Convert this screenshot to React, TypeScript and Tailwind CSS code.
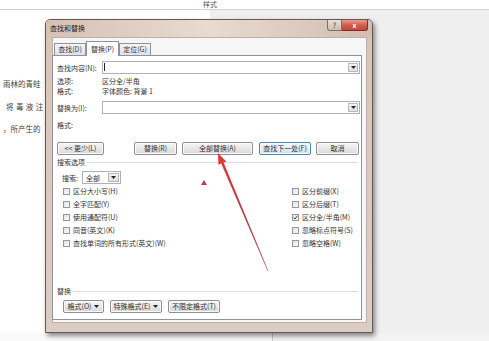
import clsx from "clsx";

const Caret = () => (
  <svg width="5" height="3" viewBox="0 0 5 3">
    <polygon points="0,0 5,0 2.5,3" fill="#222" />
  </svg>
);

const Btn = ({
  label,
  className,
  primary,
  caret,
}: {
  label: string;
  className: string;
  primary?: boolean;
  caret?: boolean;
}) => (
  <div
    className={clsx(
      "h-[13px] flex items-center justify-center gap-[3px] rounded-[2px] border text-[7px] leading-none text-[#333] shadow-[inset_0_0_0_1px_#fbfbfb]",
      primary
        ? "border-[#4a84b0] bg-linear-to-b from-[#f1f8fc] to-[#cfe2ee]"
        : "border-[#8f8f8f] bg-linear-to-b from-[#f6f6f6] to-[#d8d8d8]",
      className
    )}
  >
    <span>{label}</span>
    {caret && <Caret />}
  </div>
);

const Check = ({ label, checked }: { label: string; checked?: boolean }) => (
  <div className="h-[13px] flex items-center gap-[3px]">
    <span className="w-[7px] h-[7px] border border-[#979797] bg-linear-to-br from-[#e2e2e2] to-[#fbfbfb] flex items-center justify-center">
      {checked && (
        <svg width="5" height="5" viewBox="0 0 5 5">
          <path d="M0.6 2.6 L2 4 L4.4 0.8" stroke="#333" strokeWidth="0.9" fill="none" />
        </svg>
      )}
    </span>
    <span className="text-[7px] leading-none text-[#333]">{label}</span>
  </div>
);

const Combo = () => (
  <div className="w-[258px] h-[13px] border border-[#aeb1b8] bg-white flex justify-end p-px">
    <div className="w-[10px] h-full border border-[#b9b9b9] bg-linear-to-b from-[#f4f4f4] to-[#dedede] flex items-center justify-center">
      <Caret />
    </div>
  </div>
);

const Tab = ({ label, active }: { label: string; active?: boolean }) =>
  active ? (
    <div className="relative z-10 -mb-px h-[15px] w-[33px] border border-b-0 border-[#8d929b] bg-white flex items-center justify-center text-[7px] leading-none text-[#333]">
      {label}
    </div>
  ) : (
    <div className="mt-[2px] h-[12px] w-[32px] border border-b-0 border-[#8d929b] bg-linear-to-b from-[#f3f5f8] to-[#dde2ea] flex items-center justify-center text-[7px] leading-none text-[#333]">
      {label}
    </div>
  );

export default function App() {
  return (
    <div className="relative w-[489px] h-[341px] overflow-hidden bg-[#efefef] font-['Noto_Sans_CJK_SC',sans-serif] text-[#333]">
      {/* desktop behind */}
      <div className="flex flex-col h-full">
        <div className="h-[10px] bg-white border-b border-[#d2d2d2] pl-[203px] text-[7px] leading-[9px] text-[#555]">
          样式
        </div>
        <div className="flex flex-1">
          <div className="w-[44px] bg-white flex flex-col pt-[69px] text-[7.5px] leading-[10px] text-[#444] whitespace-nowrap">
            <div className="pl-[3px]">雨林的青蛙</div>
            <div className="pl-[6px] mt-[13px] tracking-[2.4px]">将毒液注</div>
            <div className="mt-[12px] pl-[3px]">，所产生的</div>
          </div>
          <div className="w-[166px] bg-white" />
          <div className="flex-1" />
        </div>
        <div className="h-[8px] flex">
          <div className="w-[273px] bg-[#fafafa] border-r border-[#c9c9c9]" />
          <div className="flex-1 bg-[#f3f3f3]" />
        </div>
      </div>

      {/* dialog window */}
      <div className="absolute left-[45px] top-[19px] w-[328px] h-[314px] border border-[#665954] rounded-t-[5px] bg-linear-to-b from-[#d8c4b7] to-[#dccdc2] shadow-[2px_3px_5px_rgba(0,0,0,0.45)] flex flex-col">
        <div className="h-[17px] flex items-start bg-linear-to-r from-[#d6c1b4] via-[#e8dbd0] to-[#d2bdb0] rounded-t-[4px]">
          <span className="pl-[4px] pt-[4px] text-[7px] leading-[9px] text-[#222]">查找和替换</span>
          <div className="ml-auto mr-[4px] flex h-[11px]">
            <div className="w-[15px] h-full border border-t-0 border-[#7d6f66] rounded-bl-[3px] bg-linear-to-b from-[#eae0d8] to-[#cbbcb1] flex items-center justify-center text-[7px] leading-none text-[#333]">
              ?
            </div>
            <div className="w-[26px] h-full border border-t-0 border-l-0 border-[#7a3129] rounded-br-[3px] bg-linear-to-b from-[#e69b90] via-[#d25c4f] to-[#c2463a] flex items-center justify-center text-[7px] leading-none font-bold text-white">
              x
            </div>
          </div>
        </div>

        <div className="ml-[6px] w-[315px] h-[286px] border border-[#bdb0a7] bg-[#f6f6f6] flex flex-col pt-[3px]">
          <div className="flex pl-px h-[14px] items-start">
            <Tab label="查找(D)" />
            <Tab label="替换(P)" active />
            <Tab label="定位(G)" />
          </div>

          <div className="w-[310px] h-[265px] -ml-px border border-[#8d929b] bg-white flex flex-col pt-[5px] pb-[6px] text-[7px] leading-[10px]">
            <div className="flex h-[13px] items-center pl-[4px]">
              <span className="w-[45px]">查找内容(N):</span>
              <div className="relative">
                <Combo />
                <span className="absolute left-[2px] top-[2px] w-px h-[8px] bg-[#222]" />
              </div>
            </div>
            <div className="flex h-[10px] mt-[2px] pl-[4px]">
              <span className="w-[45px]">选项:</span>
              <span>区分全/半角</span>
            </div>
            <div className="flex h-[10px] pl-[4px]">
              <span className="w-[45px]">格式:</span>
              <span>字体颜色: 背景 1</span>
            </div>
            <div className="flex h-[13px] mt-[5px] items-center pl-[4px]">
              <span className="w-[45px]">替换为(I):</span>
              <Combo />
            </div>
            <div className="flex h-[10px] mt-[6px] pl-[4px]">
              <span className="w-[45px]">格式:</span>
            </div>

            <div className="flex h-[13px] mt-[12px] pl-[4px]">
              <Btn label="<< 更少(L)" className="w-[47px]" />
              <Btn label="替换(R)" className="w-[43px] ml-[30px]" />
              <Btn label="全部替换(A)" className="w-[71px] ml-[5px]" />
              <Btn label="查找下一处(F)" className="w-[52px] ml-[6px]" primary />
              <Btn label="取消" className="w-[43px] ml-[5px]" />
            </div>

            <div className="flex h-[10px] mt-[2px] items-center pl-[4px] pr-[3px]">
              <span>搜索选项</span>
              <span className="flex-1 h-px bg-[#dcdcdc] ml-[2px]" />
            </div>

            <div className="flex h-[13px] mt-[4px] items-center pl-[9px]">
              <span className="w-[20px]">搜索:</span>
              <div className="w-[39px] h-[13px] border border-[#aeb1b8] bg-white flex items-center p-px">
                <span className="flex-1 pl-[2px]">全部</span>
                <div className="w-[11px] h-full border border-[#b9b9b9] bg-linear-to-b from-[#f4f4f4] to-[#dedede] flex items-center justify-center">
                  <Caret />
                </div>
              </div>
            </div>

            <div className="flex mt-px pl-[10px]">
              <div className="w-[229px] flex flex-col">
                <Check label="区分大小写(H)" />
                <Check label="全字匹配(Y)" />
                <Check label="使用通配符(U)" />
                <Check label="同音(英文)(K)" />
                <Check label="查找单词的所有形式(英文)(W)" />
              </div>
              <div className="flex flex-col">
                <Check label="区分前缀(X)" />
                <Check label="区分后缀(T)" />
                <Check label="区分全/半角(M)" checked />
                <Check label="忽略标点符号(S)" />
                <Check label="忽略空格(W)" />
              </div>
            </div>

            <div className="flex-1" />

            <div className="flex h-[10px] items-center pl-[4px] pr-[3px]">
              <span>替换</span>
              <span className="flex-1 h-px bg-[#dcdcdc] ml-[2px]" />
            </div>
            <div className="flex h-[13px] mt-[4px] pl-[10px] gap-[6px]">
              <Btn label="格式(O)" className="w-[41px]" caret />
              <Btn label="特殊格式(E)" className="w-[52px]" caret />
              <Btn label="不限定格式(T)" className="w-[52px]" />
            </div>
          </div>
        </div>
      </div>

      {/* red annotation arrow */}
      <svg className="absolute inset-0 pointer-events-none" width="489" height="341" viewBox="0 0 489 341">
        <defs>
          <linearGradient id="ar" x1="268" y1="271" x2="218" y2="153" gradientUnits="userSpaceOnUse">
            <stop offset="0" stopColor="#9b3a48" />
            <stop offset="1" stopColor="#e0363a" />
          </linearGradient>
        </defs>
        <polygon points="268.4,271.2 267.6,270.8 221.2,163.4 223.6,162.4" fill="url(#ar)" />
        <polygon points="218,153 226.2,161.4 218.4,164.8" fill="#de3a3c" />
        <polygon points="204,180 201,185 207,185" fill="#c8345a" />
      </svg>
    </div>
  );
}
